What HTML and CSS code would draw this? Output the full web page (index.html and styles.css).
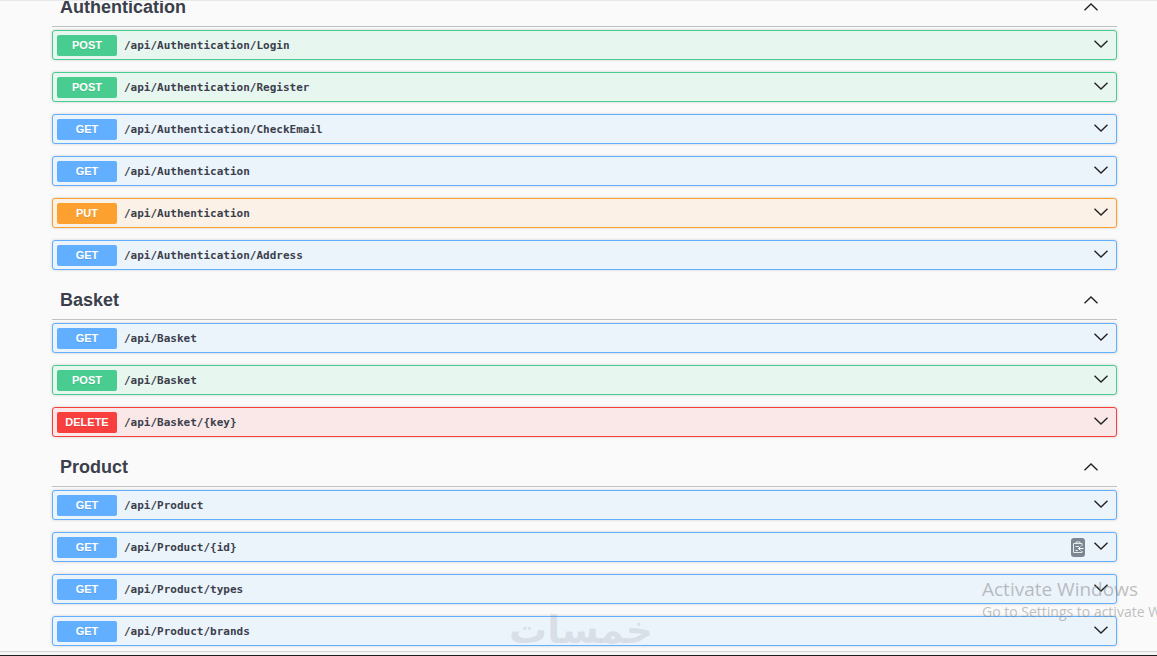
FILE: index.html
```html
<!DOCTYPE html>
<html lang="en">

<head>
    <meta charset="UTF-8">
    <meta name="viewport" content="width=device-width, initial-scale=1.0">
    <title>API</title>
    <link rel="stylesheet" href="styles.css">
</head>

<body>
    <svg class="defs" width="0" height="0" aria-hidden="true">
        <symbol id="arrow-down" viewBox="0 0 14 8">
            <path d="M.5 .8 L7 7 L13.5 .8" fill="none" stroke="#222" stroke-width="1.4" />
        </symbol>
        <symbol id="arrow-up" viewBox="0 0 14 8">
            <path d="M.5 7.200 L7 1 L13.500 7.200" fill="none" stroke="#222" stroke-width="1.4" />
        </symbol>
    </svg>

    <main class="api" id="api"></main>

    <div class="khamsat" lang="ar" dir="rtl">خمسات</div>

    <div class="activate">
        <p class="activate_title">Activate Windows</p>
        <p class="activate_text">Go to Settings to activate Windows.</p>
    </div>

    <div class="taskbar"></div>

    <script src="script.js"></script>
</body>

</html>
```
FILE: styles.css
```css
* {
    margin: 0;
    padding: 0;
    box-sizing: border-box;
}

body {
    height: 100vh;
    overflow: hidden;
    background: #fafafa;
    border-top: 1px solid #e8e8e8;
    font-family: "Liberation Sans", Arial, sans-serif;
    color: #3b3f4c;
}

button {
    border: none;
    background: none;
    cursor: pointer;
    font: inherit;
    color: inherit;
}

.defs {
    position: absolute;
}

/* the list is scrolled a little past the first heading */
.api {
    display: flex;
    flex-flow: column;
    gap: 8px;
    margin: -16px 40px 0 52px;
}

.tag_header {
    display: flex;
    justify-content: space-between;
    align-items: center;
    height: 42px;
    padding: 2px 19px 0 8px;
    border-bottom: 1px solid #c0c1c4;
    margin-bottom: 3px;
}

.tag_header h2 {
    font-size: 18px;
    line-height: 24px;
}

.arrow {
    display: block;
    width: 14px;
    height: 8px;
}

.tag_list {
    display: flex;
    flex-flow: column;
    gap: 12px;
}

.operation {
    display: flex;
    align-items: center;
    height: 30px;
    padding: 0 8px 0 4px;
    border: 1px solid;
    border-radius: 3px;
    box-shadow: 0 0 3px rgba(0, 0, 0, .19);
}

.operation .arrow {
    margin-bottom: 2px;
}

.method {
    width: 60px;
    border-radius: 2px;
    font-size: 11px;
    font-weight: bold;
    line-height: 21px;
    text-align: center;
    color: white;
    text-shadow: 0 1px 0 rgba(0, 0, 0, .1);
}

.path {
    flex: 1;
    padding-left: 7px;
    font-family: "DejaVu Sans Mono", monospace;
    font-size: 11px;
    font-weight: bold;
    text-align: left;
}

.copy {
    width: 14px;
    height: 19px;
    margin-right: 9px;
    border-radius: 3px;
    background: #7d8492;
}

.copy svg {
    display: block;
}

.get {
    border-color: #61affe;
    background: #ebf3fb;
}

.get .method {
    background: #61affe;
}

.post {
    border-color: #49cc90;
    background: #e8f6f0;
}

.post .method {
    background: #49cc90;
}

.put {
    border-color: #fca130;
    background: #fbf1e6;
}

.put .method {
    background: #fca130;
}

.delete {
    border-color: #f93e3e;
    background: #fae7e7;
}

.delete .method {
    background: #f93e3e;
}

.khamsat {
    position: absolute;
    left: 44%;
    bottom: 2px;
    font-family: "DejaVu Sans", sans-serif;
    font-size: 38px;
    line-height: 48px;
    font-weight: bold;
    color: rgba(120, 120, 120, .16);
    pointer-events: none;
}

.activate {
    position: absolute;
    left: calc(100% - 175px);
    bottom: 34px;
    font-family: "Open Sans", sans-serif;
    color: rgba(130, 130, 130, .5);
    white-space: nowrap;
    pointer-events: none;
}

.activate_title {
    font-size: 19px;
    line-height: 26px;
}

.activate_text {
    font-size: 14px;
    line-height: 20px;
}

.taskbar {
    position: absolute;
    left: 0;
    right: 0;
    bottom: 0;
    height: 5px;
    border-top: 1px solid #d4d4d4;
    border-bottom: 1px solid #1f1f1f;
    background: #f5f5f5;
}
```
FILE: script.js
```js
const tags = [
    {
        name: 'Authentication',
        operations: [
            ['post', '/api/Authentication/Login'],
            ['post', '/api/Authentication/Register'],
            ['get', '/api/Authentication/CheckEmail'],
            ['get', '/api/Authentication'],
            ['put', '/api/Authentication'],
            ['get', '/api/Authentication/Address']
        ]
    },
    {
        name: 'Basket',
        operations: [
            ['get', '/api/Basket'],
            ['post', '/api/Basket'],
            ['delete', '/api/Basket/{key}']
        ]
    },
    {
        name: 'Product',
        operations: [
            ['get', '/api/Product'],
            ['get', '/api/Product/{id}', true],
            ['get', '/api/Product/types'],
            ['get', '/api/Product/brands']
        ]
    }
]

const arrow = dir => `<svg class="arrow"><use href="#arrow-${dir}"/></svg>`

const copyButton = `
    <button class="copy" aria-label="Copy to clipboard">
        <svg width="14" height="19" viewBox="0 0 14 19" fill="none" stroke="#fff">
            <path d="M11 8V5.500H2.500V14.500H11V13M5 5.500V4H9V5.500M4.500 8.500H8M4.500 12.500H7" stroke="#dfeee4"/>
            <path d="M12.500 10.500H7.500M9.500 8.500L7.500 10.500L9.500 12.500"/>
        </svg>
    </button>`

const operation = ([method, path, copy]) => `
    <div class="operation ${method}">
        <span class="method">${method.toUpperCase()}</span>
        <button class="path">${path}</button>
        ${copy ? copyButton : ''}
        <button aria-label="Expand ${path}">${arrow('down')}</button>
    </div>`

document.querySelector('#api').innerHTML = tags.map(tag => `
    <section>
        <div class="tag_header">
            <h2>${tag.name}</h2>
            <button aria-label="Collapse ${tag.name}">${arrow('up')}</button>
        </div>
        <div class="tag_list">${tag.operations.map(operation).join('')}</div>
    </section>`).join('')
```
